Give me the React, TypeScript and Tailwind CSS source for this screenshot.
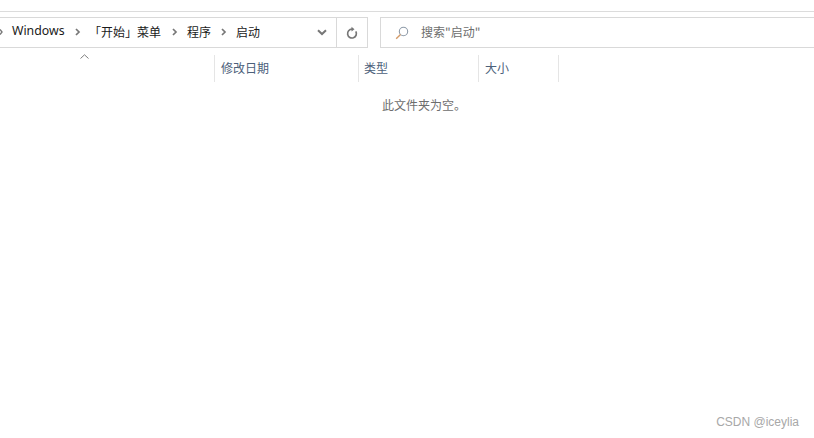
function Sep() {
	return (
		<svg width="6" height="8" viewBox="0 0 6 8" className="shrink-0">
			<path d="M1 1 L4 4 L1 7" fill="none" stroke="#777777" strokeWidth="1.7" />
		</svg>
	);
}

function Column({ label, className }: { label: string; className: string }) {
	return (
		<div className={`${className} flex h-[27px] items-center self-end border-r border-[#e5e5e5] pb-[2px] text-[12px] text-[#4c607a]`}>
			{label}
		</div>
	);
}

export default function App() {
	return (
		<div className="flex h-[438px] w-[814px] flex-col overflow-hidden bg-white font-['Noto_Sans_CJK_SC','Liberation_Sans',sans-serif]">
			<div className="mt-[11px] h-px bg-[#dcdcdc]" />
			<div className="mt-[5px] flex h-[31px] text-[12px] text-[#1a1a1a]">
				<div className="flex w-[368px] items-center border border-l-0 border-[#d9d9d9]">
					<div className="flex flex-1 items-center pb-[2px]">
						<svg width="3" height="8" viewBox="0 0 3 8" className="shrink-0">
							<path d="M0 1.5 L2 4 L0 6.5" fill="none" stroke="#777777" strokeWidth="1.4" />
						</svg>
						<span className="ml-[9px] w-[52px] font-['Noto_Sans'] text-[12.3px] whitespace-nowrap">Windows</span>
						<span className="ml-[11px]"><Sep /></span>
						<span className="ml-[8px]">「开始」菜单</span>
						<span className="ml-[11px]"><Sep /></span>
						<span className="ml-[9px]">程序</span>
						<span className="ml-[10px]"><Sep /></span>
						<span className="ml-[9px]">启动</span>
					</div>
					<svg width="10" height="7" viewBox="0 0 10 7" className="mr-[9px] shrink-0">
						<path d="M1 1.2 L5 5 L9 1.2" fill="none" stroke="#777777" strokeWidth="2" />
					</svg>
					<div className="flex h-full w-[31px] items-center justify-center border-l border-[#d9d9d9]">
						<svg width="12" height="14" viewBox="0 0 12 14">
							<path d="M9.8 5.4 A4.4 4.4 0 1 1 6 3.2" fill="none" stroke="#777777" strokeWidth="1.7" />
							<path d="M5.5 0.8 L8.5 3.2 L5.5 5.6 Z" fill="#777777" />
						</svg>
					</div>
				</div>
				<div className="ml-3 flex flex-1 items-center border border-r-0 border-[#d9d9d9] pl-[14px] text-[#6d6d6d]">
					<svg width="14" height="14" viewBox="0 0 14 14" className="shrink-0">
						<circle cx="8.5" cy="5.5" r="4.2" fill="none" stroke="#8d9aa8" strokeWidth="1.1" />
						<path d="M5.5 8.5 L1.2 12.8" stroke="#d39a68" strokeWidth="1.4" />
					</svg>
					<span className="ml-[12px] pb-px">搜索"启动"</span>
				</div>
			</div>
			<div className="mt-[6px] flex h-[28px]">
				<div className="w-[214px] pl-[80px]">
					<svg width="9" height="6" viewBox="0 0 9 6" className="block">
						<path d="M0.5 4.5 L4.5 0.8 L8.5 4.5" fill="none" stroke="#7d7d7d" strokeWidth="1" />
					</svg>
				</div>
				<div className="h-[27px] w-px self-end bg-[#e5e5e5]" />
				<Column label="修改日期" className="w-[144px] pl-[6px]" />
				<Column label="类型" className="w-[120px] pl-[5px]" />
				<Column label="大小" className="w-[80px] pl-[6px]" />
			</div>
			<div className="mt-[15px] pl-[382px] text-[12px] leading-[16px] text-[#6d6d6d]">此文件夹为空。</div>
			<div className="mt-auto flex justify-end pr-[15px] pb-[9px] font-['Liberation_Sans'] text-[12px] leading-[14px] text-[#a8a8a8]">
				CSDN @iceylia
			</div>
		</div>
	);
}
